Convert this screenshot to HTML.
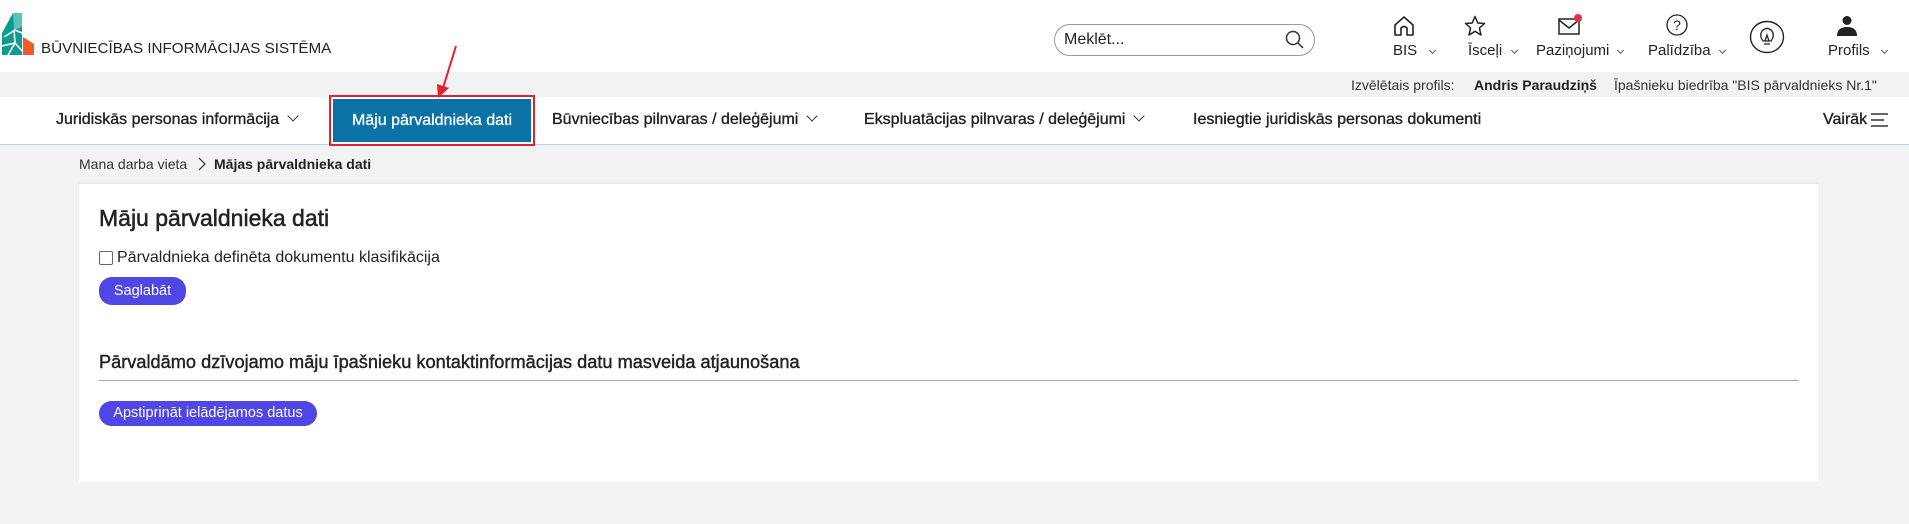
<!DOCTYPE html>
<html><head><meta charset="utf-8"><style>
*{box-sizing:border-box;margin:0;padding:0}
body{width:1909px;height:524px;background:#f3f3f3;font-family:"Liberation Sans",sans-serif;color:#222;position:relative;overflow:hidden}
.abs{position:absolute;white-space:nowrap}
#top{position:absolute;left:0;top:0;width:1909px;height:72px;background:#fff}
#bar{position:absolute;left:0;top:72px;width:1909px;height:25px;background:#f2f2f2;font-size:14px}
#nav{position:absolute;left:0;top:97px;width:1909px;height:48px;background:#fff;border-bottom:1.5px solid #a9d6ee}
.ni{position:absolute;top:14px;font-size:16px;color:#222;-webkit-text-stroke:0.35px #222;white-space:nowrap}
.chev{display:inline-block;width:8px;height:8px;border-right:1.3px solid #333;border-bottom:1.3px solid #333;transform:rotate(45deg);margin-left:10px;position:relative;top:-4px}
.sm{display:inline-block;width:5px;height:5px;border-right:1px solid #555;border-bottom:1px solid #555;transform:rotate(45deg);position:absolute;top:48px}
.lbl{position:absolute;top:42px;font-size:15px;color:#222}
#card{position:absolute;left:79px;top:184px;width:1740px;height:298px;background:#fff;box-shadow:0 -1px 2px rgba(0,0,0,.08)}
.btn{position:absolute;background:#4f46e5;color:#fff;border-radius:13px;font-size:14.5px;text-align:center}
</style></head><body>
<div id="top">
<svg class="abs" style="left:2px;top:13px" width="34" height="42" viewBox="0 0 34 42">
<polygon points="11,0 20,0 20,42 0,42 0,20" fill="#0c9a93"/>
<polygon points="11,0 20,0 20,14 12,17" fill="#5dc1bb"/>
<polygon points="21,24 32,31 32,42 21,42" fill="#f05a28"/>
<path d="M2,24 L13,17 L20,20 M6,42 L13,30 L20,38 M0,33 L13,30 M12,17 L13,30" stroke="#fff" stroke-width="1.6" fill="none"/>
</svg>
<div class="abs" style="left:41px;top:40px;font-size:15.2px;color:#222">BŪVNIECĪBAS INFORMĀCIJAS SISTĒMA</div>
<div class="abs" style="left:1054px;top:24px;width:261px;height:32px;border:1px solid #999;border-radius:16px;"></div>
<div class="abs" style="left:1064px;top:31px;font-size:16px;color:#222">Meklēt...</div>
<svg class="abs" style="left:1285px;top:30px" width="20" height="20" viewBox="0 0 20 20"><circle cx="8" cy="8" r="6.5" stroke="#333" stroke-width="1.5" fill="none"/><path d="M13,13 L18,18" stroke="#333" stroke-width="1.5"/></svg>
<svg class="abs" style="left:1393px;top:16px" width="22" height="20" viewBox="0 0 22 20"><path d="M2,9 L11,1 L20,9 L20,19 L14,19 L14,12 Q11,9 8,12 L8,19 L2,19 Z" stroke="#222" stroke-width="1.6" fill="none" stroke-linejoin="round"/></svg>
<div class="lbl" style="left:1393px">BIS</div><span class="sm" style="left:1430px"></span>
<svg class="abs" style="left:1464px;top:15px" width="22" height="22" viewBox="0 0 22 22"><path d="M11,1.5 L13.8,8 L20.5,8.5 L15.4,13 L17,20 L11,16.3 L5,20 L6.6,13 L1.5,8.5 L8.2,8 Z" stroke="#222" stroke-width="1.5" fill="none" stroke-linejoin="round"/></svg>
<div class="lbl" style="left:1468px">Īsceļi</div><span class="sm" style="left:1512px"></span>
<svg class="abs" style="left:1558px;top:14px" width="26" height="22" viewBox="0 0 26 22"><rect x="1" y="5" width="20" height="15" stroke="#222" stroke-width="1.5" fill="none"/><path d="M1,6 L11,14 L21,6" stroke="#222" stroke-width="1.5" fill="none"/><circle cx="20" cy="4" r="4" fill="#e8323f"/></svg>
<div class="lbl" style="left:1536px">Paziņojumi</div><span class="sm" style="left:1618px"></span>
<svg class="abs" style="left:1666px;top:14px" width="22" height="22" viewBox="0 0 22 22"><circle cx="11" cy="11" r="10" stroke="#222" stroke-width="1.3" fill="none"/><text x="11" y="16" font-size="14" text-anchor="middle" font-family="Liberation Sans" fill="#222">?</text></svg>
<div class="lbl" style="left:1648px">Palīdzība</div><span class="sm" style="left:1720px"></span>
<svg class="abs" style="left:1749px;top:20px" width="36" height="34" viewBox="0 0 36 34"><ellipse cx="18" cy="17" rx="16.5" ry="15.5" stroke="#222" stroke-width="1.4" fill="none"/><path d="M14,21 Q10,16 13,11 Q18,6 23,11 Q26,16 22,21 Z M14,21 L22,21 M15,24 L21,24 M16,21 L18,15 L20,21" stroke="#222" stroke-width="1.3" fill="none"/></svg>
<svg class="abs" style="left:1836px;top:15px" width="22" height="22" viewBox="0 0 22 22"><circle cx="11" cy="5.5" r="4.5" fill="#222"/><path d="M1,21 Q1,12 11,12 Q21,12 21,21 Z" fill="#222"/></svg>
<div class="lbl" style="left:1828px">Profils</div><span class="sm" style="left:1882px"></span>
</div>
<div id="bar">
<div class="abs" style="left:1351px;top:5px;color:#333">Izvēlētais profils:</div>
<div class="abs" style="left:1474px;top:5px;font-weight:bold;color:#222">Andris Paraudziņš</div>
<div class="abs" style="left:1614px;top:5px;color:#333">Īpašnieku biedrība "BIS pārvaldnieks Nr.1"</div>
</div>
<div id="nav">
<div class="ni" style="left:56px">Juridiskās personas informācija<span class="chev"></span></div>
<div class="abs" style="left:329px;top:-2px;width:206px;height:51px;border:2px solid #e0212f;padding:2px">
<div style="background:#0b72a8;width:100%;height:100%;color:#fff;font-size:16px;-webkit-text-stroke:0.3px #fff;text-align:center;line-height:43px">Māju pārvaldnieka dati</div></div>
<div class="ni" style="left:552px">Būvniecības pilnvaras / deleģējumi<span class="chev"></span></div>
<div class="ni" style="left:864px">Ekspluatācijas pilnvaras / deleģējumi<span class="chev"></span></div>
<div class="ni" style="left:1193px">Iesniegtie juridiskās personas dokumenti</div>
<div class="ni" style="left:1823px">Vairāk</div>
<svg class="abs" style="left:1871px;top:15px" width="18" height="16" viewBox="0 0 18 16"><path d="M0,2 H17 M0,8 H13 M0,14 H17" stroke="#333" stroke-width="1.4"/></svg>
</div>
<svg class="abs" style="left:0;top:0" width="600" height="110"><path d="M456,46 L443,88" stroke="#e0212f" stroke-width="2"/><polygon points="438,98 437,84 449,88" fill="#e0212f"/></svg>
<div class="abs" style="left:79px;top:156px;font-size:14px;color:#333">Mana darba vieta</div>
<svg class="abs" style="left:197px;top:157px" width="10" height="14"><path d="M2,1 L8,7 L2,13" stroke="#444" stroke-width="1.3" fill="none"/></svg>
<div class="abs" style="left:214px;top:156px;font-size:14px;font-weight:bold;color:#222">Mājas pārvaldnieka dati</div>
<div id="card">
<div class="abs" style="left:20px;top:21px;font-size:23px;color:#222;-webkit-text-stroke:0.5px #222">Māju pārvaldnieka dati</div>
<div class="abs" style="left:20px;top:67px;width:14px;height:14px;border:1px solid #666;border-radius:2px"></div>
<div class="abs" style="left:38px;top:65px;font-size:16px;color:#222">Pārvaldnieka definēta dokumentu klasifikācija</div>
<div class="btn" style="left:20px;top:93px;width:87px;height:28px;line-height:28px">Saglabāt</div>
<div class="abs" style="left:20px;top:168px;font-size:18.2px;color:#222;-webkit-text-stroke:0.4px #222">Pārvaldāmo dzīvojamo māju īpašnieku kontaktinformācijas datu masveida atjaunošana</div>
<div class="abs" style="left:20px;top:196px;width:1700px;height:1px;background:#aaa"></div>
<div class="btn" style="left:20px;top:217px;width:218px;height:25px;line-height:25px">Apstiprināt ielādējamos datus</div>
</div>
</body></html>
